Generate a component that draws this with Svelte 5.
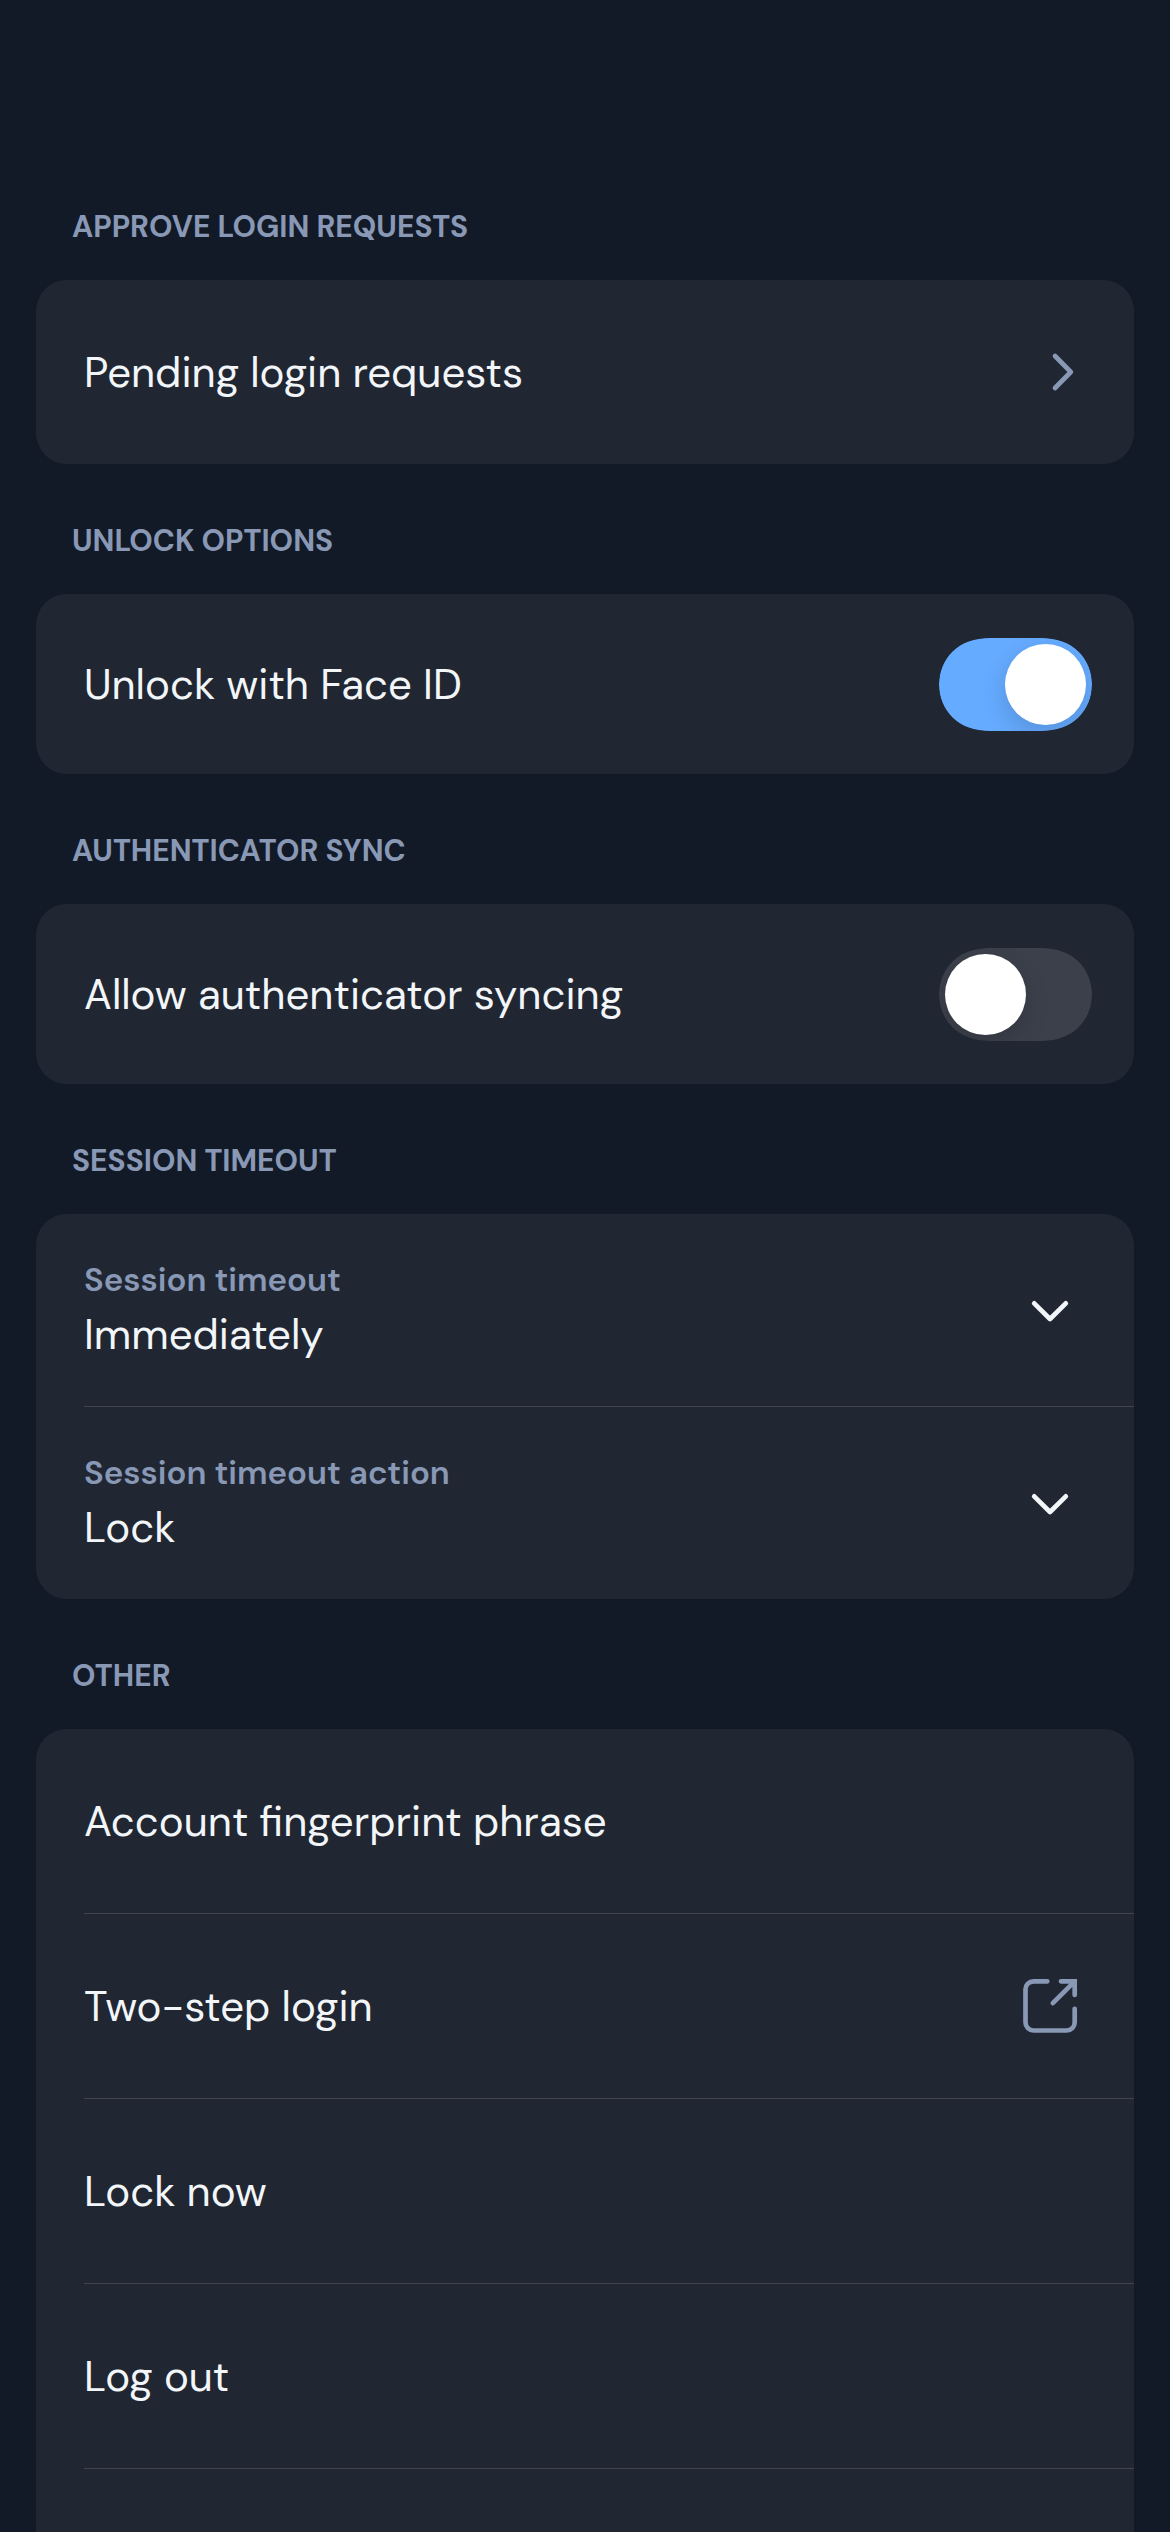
<script>
  const sections = [
    {
      title: 'APPROVE LOGIN REQUESTS',
      rows: [{ text: 'Pending login requests', icon: 'chevron-right' }]
    },
    {
      title: 'UNLOCK OPTIONS',
      rows: [{ text: 'Unlock with Face ID', toggle: true, on: true }]
    },
    {
      title: 'AUTHENTICATOR SYNC',
      rows: [{ text: 'Allow authenticator syncing', toggle: true, on: false }]
    },
    {
      title: 'SESSION TIMEOUT',
      rows: [
        { label: 'Session timeout', text: 'Immediately', icon: 'chevron-down' },
        { label: 'Session timeout action', text: 'Lock', icon: 'chevron-down' }
      ]
    },
    {
      title: 'OTHER',
      open: true,
      rows: [
        { text: 'Account fingerprint phrase' },
        { text: 'Two-step login', icon: 'external' },
        { text: 'Lock now' },
        { text: 'Log out' }
      ]
    }
  ];
</script>

<main class="screen">
  {#each sections as section}
    <section class:open={section.open}>
      <h2>{section.title}</h2>
      <ul class="card">
        {#each section.rows as row}
          <li class="row" class:field={row.label} class:switch-row={row.toggle}>
            <div class="texts">
              {#if row.label}
                <span class="label">{row.label}</span>
              {/if}
              <span class="text">{row.text}</span>
            </div>
            {#if row.toggle}
              <button class="toggle" class:on={row.on} role="switch" aria-checked={row.on} aria-label={row.text}>
                <svg class="track" viewBox="0 0 153 93" width="153" height="93" aria-hidden="true">
                  <path d="M0 46.5C0 19.5 19.5 0 51 0H102C133.5 0 153 19.5 153 46.5C153 73.5 133.5 93 102 93H51C19.5 93 0 73.5 0 46.5Z" />
                </svg>
                <span class="knob"></span>
              </button>
            {:else if row.icon === 'chevron-right'}
              <svg class="icon muted" viewBox="0 0 72 72" width="72" height="72" aria-hidden="true">
                <path d="M41 20L56.8 36L41 52" />
              </svg>
            {:else if row.icon === 'chevron-down'}
              <svg class="icon" viewBox="0 0 72 72" width="72" height="72" aria-hidden="true">
                <path d="M20.2 29.3L36 45L51.8 29.3" />
              </svg>
            {:else if row.icon === 'external'}
              <svg class="icon muted" viewBox="0 0 72 72" width="72" height="72" aria-hidden="true">
                <path d="M33.3 11.3H19.5A8 8 0 0 0 11.5 19.3V52.5A8 8 0 0 0 19.5 60.5H52.7A8 8 0 0 0 60.7 52.5V38.8" />
                <path class="sharp" d="M47 11.3H60.7V25M60.2 11.8L38.8 33.2" />
              </svg>
            {/if}
          </li>
        {/each}
      </ul>
    </section>
  {/each}
</main>

<style>
  :global(body) {
    background: #121a27;
  }

  .screen {
    box-sizing: border-box;
    display: flex;
    flex-direction: column;
    height: 2532px;
    padding: 150px 36px 0;
    overflow: hidden;
    background: #121a27;
    color: #f3f6f9;
    font-family: 'DM Sans', 'Open Sans', sans-serif;
  }

  section {
    flex: none;
  }

  section.open {
    display: flex;
    flex: 1;
    flex-direction: column;
  }

  h2 {
    box-sizing: border-box;
    height: 130px;
    margin: 0;
    padding: 57px 0 0 36px;
    color: #8898b5;
    font-size: 30px;
    font-weight: 700;
    line-height: 39px;
  }

  .card {
    margin: 0;
    padding: 0;
    overflow: hidden;
    border-radius: 31px;
    background: #202733;
    list-style: none;
  }

  .open .card {
    flex: 1;
    border-radius: 31px 31px 0 0;
  }

  .row {
    display: flex;
    align-items: center;
    justify-content: space-between;
    box-sizing: border-box;
    height: 184px;
    margin-left: 48px;
    padding-right: 48px;
  }

  .row + .row {
    height: 185px;
    border-top: 1px solid #42434a;
  }

  .open .row:last-child {
    height: 186px;
    border-bottom: 1px solid #42434a;
  }

  .switch-row {
    height: 180px;
    padding-right: 42px;
  }

  .field {
    height: 192px;
  }

  .row + .field {
    height: 193px;
  }

  .texts {
    display: flex;
    flex-direction: column;
    padding-top: 1px;
  }

  .text {
    font-size: 42px;
    line-height: 56px;
    white-space: nowrap;
  }

  .label {
    color: #8898b5;
    font-size: 33px;
    font-weight: 600;
    line-height: 43px;
  }

  .field .texts {
    align-self: flex-start;
    gap: 6px;
    padding-top: 44px;
  }

  .field .text {
    line-height: 55px;
  }

  .icon {
    flex: none;
    fill: none;
    stroke: #f3f6f9;
    stroke-width: 4.7;
    stroke-linecap: round;
    stroke-linejoin: round;
  }

  .muted {
    stroke: #8898b5;
  }

  .sharp {
    stroke-linejoin: miter;
  }

  .toggle {
    display: flex;
    align-items: center;
    position: relative;
    flex: none;
    width: 153px;
    height: 93px;
    margin: 1px 0 0;
    padding: 0 6px;
    overflow: hidden;
    border: 0;
    border-radius: 46px;
    background: none;
  }

  .toggle.on {
    justify-content: flex-end;
  }

  .track {
    position: absolute;
    inset: 0;
    fill: #3c404b;
  }

  .on .track {
    fill: #65abff;
  }

  .knob {
    position: relative;
    width: 81px;
    height: 81px;
    border-radius: 50%;
    background: #fff;
    box-shadow: 0 9px 24px rgb(0 0 0 / 0.15);
  }
</style>
